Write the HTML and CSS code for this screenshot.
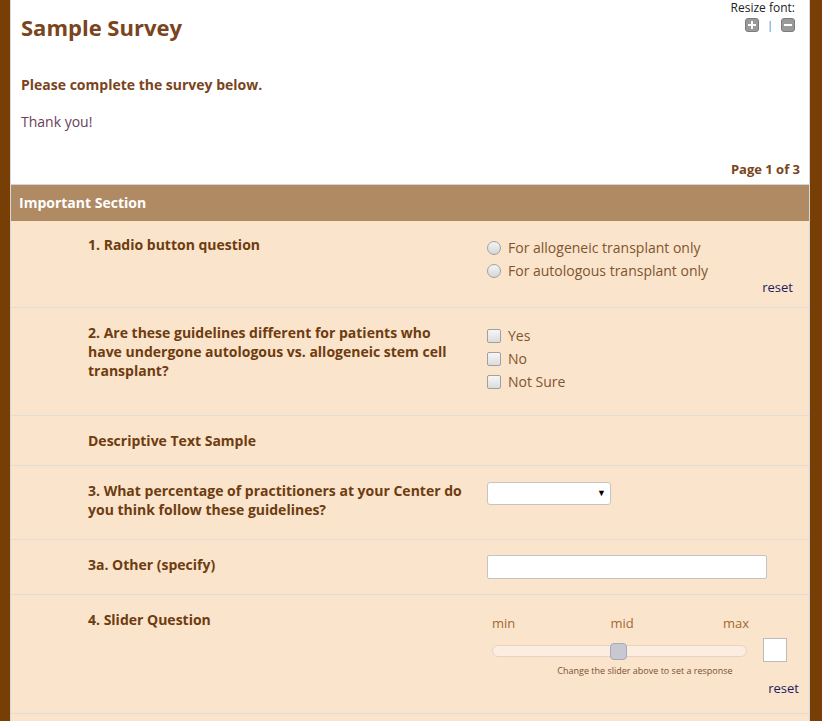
FILE: index.html
```html
<!DOCTYPE html>
<html>
<head>
<meta charset="utf-8">
<link rel="stylesheet" href="styles.css">
</head>
<body>
<div class="page">
  <div class="header">
    <div class="resize">
      <div class="resize-label">Resize font:</div>
      <div class="resize-btns">
        <span class="rbtn"><svg width="14" height="14" viewBox="0 0 14 14"><rect x="0.5" y="0.5" width="13" height="13" rx="2.5" fill="#9a9a9a" stroke="#7d7d7d"/><rect x="3" y="6" width="8" height="2" fill="#fff"/><rect x="6" y="3" width="2" height="8" fill="#fff"/></svg></span>
        <span class="rsep">|</span>
        <span class="rbtn"><svg width="14" height="14" viewBox="0 0 14 14"><rect x="0.5" y="0.5" width="13" height="13" rx="2.5" fill="#9a9a9a" stroke="#7d7d7d"/><rect x="3" y="6" width="8" height="2" fill="#fff"/></svg></span>
      </div>
    </div>
    <h1 class="title">Sample Survey</h1>
    <p class="intro-bold">Please complete the survey below.</p>
    <p class="intro">Thank you!</p>
    <div class="pagenum">Page 1 of 3</div>
  </div>
  <div class="section">Important Section</div>
  <div class="rows">
    <div class="row row1">
      <div class="q">1. Radio button question</div>
      <div class="a">
        <label class="opt"><span class="radio"></span>For allogeneic transplant only</label>
        <label class="opt"><span class="radio"></span>For autologous transplant only</label>
        <div class="reset">reset</div>
      </div>
    </div>
    <div class="row row2">
      <div class="q">2. Are these guidelines different for patients who have undergone autologous vs. allogeneic stem cell transplant?</div>
      <div class="a">
        <label class="opt"><span class="check"></span>Yes</label>
        <label class="opt"><span class="check"></span>No</label>
        <label class="opt"><span class="check"></span>Not Sure</label>
      </div>
    </div>
    <div class="row row3">
      <div class="q">Descriptive Text Sample</div>
    </div>
    <div class="row row4">
      <div class="q">3. What percentage of practitioners at your Center do you think follow these guidelines?</div>
      <div class="a">
        <div class="select"><span class="arrow">▼</span></div>
      </div>
    </div>
    <div class="row row5">
      <div class="q">3a. Other (specify)</div>
      <div class="a">
        <div class="textin"></div>
      </div>
    </div>
    <div class="row row6">
      <div class="q">4. Slider Question</div>
      <div class="a slider-a">
        <div class="slider-wrap">
          <div class="slider-main">
            <div class="slabels"><span>min</span><span>mid</span><span>max</span></div>
            <div class="track"><div class="thumb"></div></div>
            <div class="shint">Change the slider above to set a response</div>
          </div>
          <div class="sbox"></div>
        </div>
        <div class="reset reset2">reset</div>
      </div>
    </div>
    <div class="row row7"></div>
  </div>
</div>
</body>
</html>
```
FILE: styles.css
```css
html, body {
  margin: 0;
  padding: 0;
}
body {
  background: #773e05;
  font-family: "Open Sans", "Liberation Sans", sans-serif;
  height: 721px;
  overflow: hidden;
}
.page {
  margin-left: 10px;
  width: 798px;
  border-left: 1px solid #d8d8d8;
  border-right: 1px solid #d8d8d8;
  background: #fff;
  min-height: 721px;
}
.header {
  position: relative;
  padding: 12px 9px 0 10px;
  height: 185px;
  box-sizing: border-box;
  border-bottom: 1px solid #d4d4d4;
}
.resize {
  position: absolute;
  right: 14px;
  top: 0;
  text-align: right;
}
.resize-label {
  font-size: 12px;
  color: #222;
  line-height: 15px;
}
.resize-btns {
  display: flex;
  align-items: center;
  justify-content: flex-end;
  gap: 8px;
  margin-top: 3px;
}
.rbtn { display: block; width: 14px; height: 14px; }
.rbtn svg { display: block; }
.rsep { color: #3a7fc1; font-size: 11px; line-height: 14px; }
.title {
  margin: 0;
  font-size: 22px;
  font-weight: 700;
  color: #7a4420;
  line-height: 30px;
}
.intro-bold {
  margin: 33px 0 0;
  font-size: 14px;
  font-weight: 700;
  color: #7a4420;
  line-height: 20px;
}
.intro {
  margin: 17px 0 0;
  font-size: 14px;
  color: #683e5a;
  line-height: 20px;
}
.pagenum {
  text-align: right;
  font-size: 13px;
  font-weight: 700;
  color: #7a4420;
  margin-top: 28px;
  line-height: 18px;
}
.section {
  background: #b08a63;
  color: #fff;
  font-weight: 700;
  font-size: 14px;
  height: 36px;
  line-height: 35px;
  padding-left: 8px;
}
.rows { background: #fbe4cc; }
.row {
  display: flex;
  border-bottom: 1px solid #e2dcd6;
  box-sizing: border-box;
}
.q {
  width: 380px;
  padding: 14px 0 0 77px;
  font-size: 14px;
  font-weight: 700;
  color: #6d3c10;
  line-height: 19px;
  flex-shrink: 0;
}
.a {
  flex: 1;
  padding-left: 19px;
  padding-right: 16px;
}
.row1 { height: 87px; }
.row2 { height: 108px; }
.row3 { height: 50px; }
.row3 .q { width: auto; }
.row4 { height: 74px; }
.row5 { height: 55px; }
.row6 { height: 119px; }
.row7 { height: 20px; border-bottom: none; }
.row2 .q, .row3 .q, .row4 .q, .row5 .q, .row6 .q { padding-top: 15px; }
.opt {
  display: flex;
  align-items: center;
  font-size: 14px;
  color: #80542e;
  line-height: 23px;
  height: 23px;
}
.row1 .a { padding-top: 15px; }
.row2 .a { padding-top: 16px; }
.radio {
  width: 14px;
  height: 14px;
  border-radius: 50%;
  border: 1px solid #a0a0a0;
  background: linear-gradient(#f4f4f4, #d6d6d6);
  margin-right: 7px;
  box-sizing: border-box;
}
.check {
  width: 14px;
  height: 14px;
  border-radius: 2px;
  border: 1px solid #a0a0a0;
  background: linear-gradient(#f6f6f6, #dcdcdc);
  margin-right: 7px;
  box-sizing: border-box;
}
.reset {
  text-align: right;
  font-size: 13px;
  color: #1c1c5e;
  line-height: 16px;
  margin-top: -3px;
}
.select {
  margin-top: 16px;
  width: 124px;
  height: 23px;
  border: 1px solid #c4c4c4;
  border-radius: 3px;
  background: #fff;
  box-sizing: border-box;
  position: relative;
}
.arrow {
  position: absolute;
  right: 4px;
  top: 3px;
  font-size: 9px;
  color: #000;
}
.textin {
  margin-top: 15px;
  width: 280px;
  height: 24px;
  border: 1px solid #c4c4c4;
  border-radius: 2px;
  background: #fff;
  box-sizing: border-box;
}
.slider-a { padding-right: 10px; }
.slider-wrap {
  display: flex;
  align-items: flex-start;
  margin-top: 20px;
}
.slider-main { width: 262px; }
.slabels {
  display: flex;
  justify-content: space-between;
  font-size: 13px;
  color: #a06a30;
  padding: 0 0 0 5px;
  line-height: 16px;
}
.slabels span:nth-child(2) { margin-left: 6px; }
.track {
  position: relative;
  margin: 14px 0 0 5px;
  width: 255px;
  height: 12px;
  border: 1px solid #e6d3c2;
  border-radius: 6px;
  background: #fcede0;
  box-sizing: border-box;
}
.thumb {
  position: absolute;
  left: 117px;
  top: -3px;
  width: 17px;
  height: 17px;
  border: 1px solid #a9a9b6;
  border-radius: 4px;
  background: #c8c8d0;
  box-sizing: border-box;
}
.shint {
  font-size: 9px;
  color: #7a5030;
  text-align: center;
  margin-top: 7px;
  padding-left: 54px;
}
.sbox {
  margin-left: 14px;
  margin-top: 23px;
  width: 24px;
  height: 24px;
  border: 1px solid #bbb;
  background: #fff;
  box-sizing: border-box;
}
.reset2 { margin-top: 3px; }
```
